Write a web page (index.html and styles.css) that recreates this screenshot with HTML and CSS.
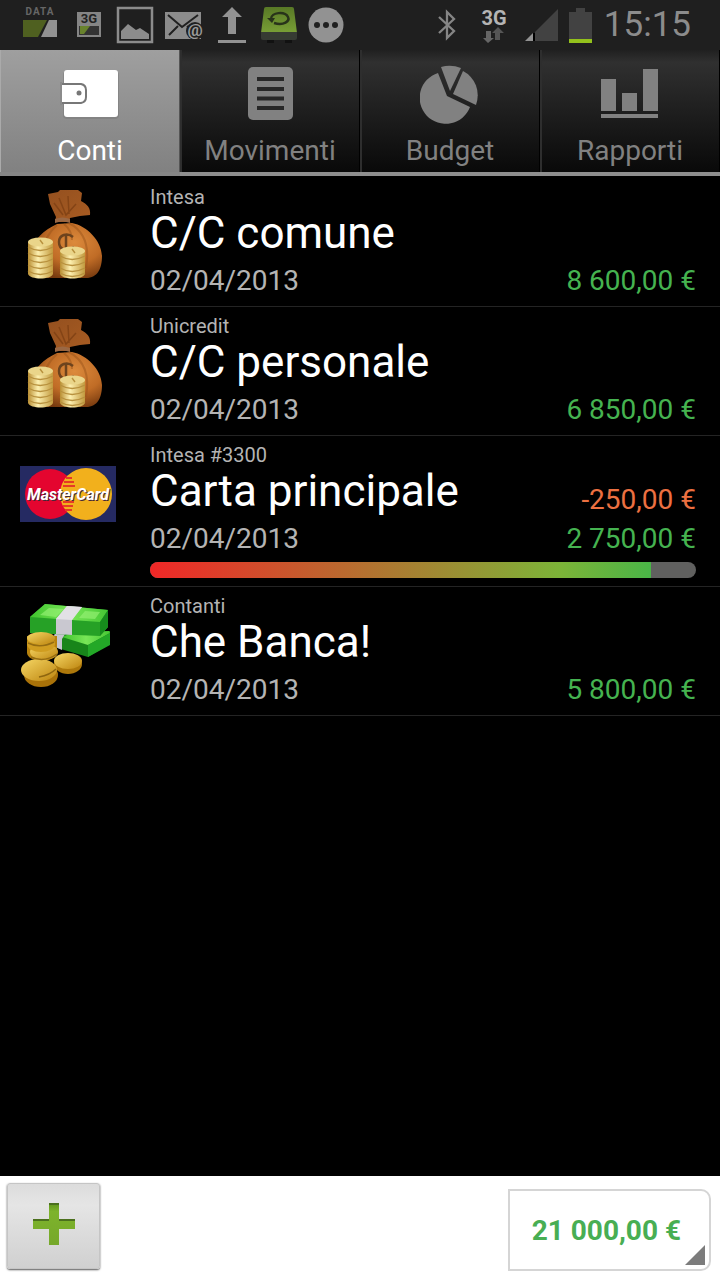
FILE: index.html
```html
<!DOCTYPE html>
<html lang="it">
<head>
<meta charset="utf-8">
<meta name="viewport" content="width=device-width, initial-scale=1">
<title>Conti</title>
<link rel="stylesheet" href="styles.css">
</head>
<body>
<svg class="defs" aria-hidden="true">
  <defs>
    <radialGradient id="bagFill" cx=".62" cy=".35" r=".7"><stop offset="0" stop-color="#dc8a3c"/><stop offset=".55" stop-color="#c06c26"/><stop offset="1" stop-color="#74380e"/></radialGradient>
    <linearGradient id="bagTop" x1="0" y1="0" x2="1" y2="1"><stop offset="0" stop-color="#94501f"/><stop offset="1" stop-color="#a85c22"/></linearGradient>
    <linearGradient id="goldFill"><stop offset="0" stop-color="#b98e32"/><stop offset=".4" stop-color="#fdf0b0"/><stop offset="1" stop-color="#c29a3e"/></linearGradient>
    <linearGradient id="coinFill" x1="0" y1="0" x2="1" y2="1"><stop offset="0" stop-color="#f6d765"/><stop offset="1" stop-color="#bd850f"/></linearGradient>
    <linearGradient id="noteTop"><stop offset="0" stop-color="#3fc42d"/><stop offset=".5" stop-color="#78e657"/><stop offset="1" stop-color="#46c834"/></linearGradient>
    <linearGradient id="driveFill" x1="0" y1="0" x2="0" y2="1"><stop offset="0" stop-color="#587826"/><stop offset="1" stop-color="#799f36"/></linearGradient>
    <linearGradient id="plusFill" x1="0" y1="0" x2="0" y2="1"><stop offset="0" stop-color="#5e931b"/><stop offset=".2" stop-color="#7db32b"/><stop offset="1" stop-color="#76a82b"/></linearGradient>
    <symbol id="bag" viewBox="0 0 96 96">
      <path d="M37 38C24 44 12 54 10 69C8 80 12 90 22 92H66C78 92 82 82 82 70C81 54 67 40 52 37Z" fill="url(#bagFill)"/>
      <path d="M28 8L38 6L40 4H58L62 7L61 15C67 18 71 22 70 29L60 30L50 32L49 36H35L36 31L30 18Z" fill="url(#bagTop)"/>
      <path d="M39 12L46 29L56 18M34 17L43 29M48 10L49 28" stroke="#844416" stroke-width="1.500" fill="none"/>
      <path d="M35 33C40 31 45 31 50 33V37C45 35 40 35 35 37Z" fill="#9a6844"/>
      <path d="M37 39C28 47 23 56 22 70M44 38C50 43 52 48 52 54M49 37C64 45 70 60 66 82" stroke="#9a5319" stroke-width="2" fill="none" opacity=".5"/>
      <path d="M53 51C47 46 39 49 39 56C39 64 47 66 54 61M46 48V63" stroke="#6d431d" stroke-width="2.500" fill="none"/>
      <path d="M8 56V88C10 94 31 94 33 88V56Z" fill="url(#goldFill)"/>
      <ellipse cx="20.500" cy="56" rx="12.500" ry="4.500" fill="#ead58a"/>
      <path d="M8 61Q20 68 33 61M8 67Q20 74 33 67M8 73Q20 80 33 73M8 79Q20 86 33 79M8 85Q20 92 33 85" stroke="#b8913e" stroke-width="1.400" fill="none"/>
      <path d="M40 65V88C42 94 63 94 65 88V65Z" fill="url(#goldFill)"/>
      <ellipse cx="52.500" cy="65" rx="12.500" ry="4.500" fill="#ead58a"/>
      <path d="M40 70Q52 77 65 70M40 76Q52 83 65 76M40 82Q52 89 65 82M40 87Q52 94 65 87M20 54l3 4M52 63l3 4" stroke="#b8913e" stroke-width="1.400" fill="none"/>
    </symbol>
  </defs>
</svg>

<header class="status">
  <div class="status-group">
    <svg class="s-data" width="38" height="40" viewBox="0 0 38 40"><text x="19" y="10" text-anchor="middle" class="t-data">DATA</text><path d="M2 15H26L17 32H2Z" fill="#4f6020"/><path d="M28 15H36V32H20Z" fill="#929292"/></svg>
    <svg class="s-3g" width="26" height="28" viewBox="0 0 26 28"><rect x="1" y="1" width="24" height="25" fill="#858585"/><text x="13" y="12" text-anchor="middle" class="t-mini">3G</text><rect x="3" y="15" width="20" height="9" fill="#333"/><path d="M4 15H14L8 23H4Z" fill="#68822c"/></svg>
    <svg width="38" height="38" viewBox="0 0 38 38"><rect x="2" y="2" width="34" height="34" fill="none" stroke="#8c8c8c" stroke-width="2.500"/><path d="M5 33V25L12 18L20 24L24 22L33 28V33Z" fill="#8c8c8c"/></svg>
    <svg class="s-mail" width="40" height="32" viewBox="0 0 40 32"><path d="M1 3H37V30H1Z" fill="#8c8c8c"/><path d="M4 6L18 18L34 6M5 26L14 17M23 17L32 26" fill="none" stroke="#202020" stroke-width="2"/><circle cx="31" cy="22" r="9" fill="#202020"/><text x="31" y="27" text-anchor="middle" class="t-at">@</text></svg>
    <svg width="28" height="38" viewBox="0 0 28 38"><path d="M14 1L24 11H18V28H10V11H4Z" fill="#929292"/><path d="M0 34H28V37H0Z" fill="#929292"/></svg>
    <svg class="s-drive" width="38" height="38" viewBox="0 0 38 38"><path d="M6 1H32Q34 1 34 3L37 27H1L4 3Q4 1 6 1Z" fill="url(#driveFill)"/><path d="M1 26H37V32Q37 34 35 34H3Q1 34 1 32Z" fill="#363b33"/><path d="M7 34h7v3h-7zM25 34h7v3h-7z" fill="#111"/><path d="M14 17C24 20 30 15 28 11C25 5 11 6 11 13" fill="none" stroke="#28331a" stroke-width="2.500"/><path d="M7 12H15L12 17Z" fill="#28331a"/></svg>
    <svg width="36" height="36" viewBox="0 0 36 36"><circle cx="18" cy="18" r="17.500" fill="#929292"/><g fill="#202020"><circle cx="9" cy="18" r="3"/><circle cx="18" cy="18" r="3"/><circle cx="27" cy="18" r="3"/></g></svg>
  </div>
  <div class="status-group status-right">
    <svg width="20" height="32" viewBox="0 0 20 32"><path d="M2 8L17 22L10 29V3L17 10L2 24" fill="none" stroke="#858585" stroke-width="2.300"/></svg>
    <svg class="s-net" width="30" height="42" viewBox="0 0 30 42"><text x="15" y="21" text-anchor="middle" class="t-net">3G</text><path d="M7 27H12V34H15L9 39L4 34H7Z" fill="#666"/><path d="M16 36V29H13L19 23L25 29H21V36Z" fill="#555"/></svg>
    <svg width="34" height="34" viewBox="0 0 34 34"><path d="M33 1V33H10V24Z" fill="#424242"/><path d="M8 25V33H0Z" fill="#929292"/><path d="M8 25H10V33H8Z" fill="#000"/></svg>
    <svg width="23" height="35" viewBox="0 0 23 35"><path d="M7 0H16V4H23V31H0V4H7Z" fill="#424242"/><path d="M0 31H23V35H0Z" fill="#93c11c"/></svg>
    <time class="clock">15:15</time>
  </div>
</header>

<nav class="tabs">
  <button class="tab tab-on" type="button">
    <svg width="60" height="60" viewBox="0 0 60 60"><rect x="3" y="7" width="56" height="48" rx="4" fill="#777" opacity=".5"/><rect x="4" y="6" width="54" height="47" rx="3" fill="#fff"/><path d="M0 20H21Q26 21 26 26V33Q26 38 21 39H0Z" fill="#fff" stroke="#777" stroke-width="2"/><path d="M0 18h2v23H0z" fill="#8b8b8b"/><path d="M2 21h2v17H2z" fill="#fff"/><circle cx="19" cy="29" r="2.500" fill="#777"/></svg>
    <span>Conti</span>
  </button>
  <button class="tab" type="button">
    <svg width="60" height="60" viewBox="0 0 60 60"><rect x="8" y="3" width="45" height="53" rx="5" fill="#818181"/><path d="M17 15H44M17 25H44M17 34.500H44M17 44H44" stroke="#272727" stroke-width="4"/></svg>
    <span>Movimenti</span>
  </button>
  <button class="tab" type="button">
    <svg width="60" height="60" viewBox="0 0 60 60"><g fill="#818181"><path d="M27 32L18 9A26 26 0 1 0 50 43Z"/><path d="M30 27L21 3Q31 0 41 4Z"/><path d="M33 30L43 7A26 27 0 0 1 56 41Z"/></g></svg>
    <span>Budget</span>
  </button>
  <button class="tab" type="button">
    <svg width="60" height="60" viewBox="0 0 60 60"><path d="M1 15H16V47H1ZM22 29H37V47H22ZM43 5H58V47H43ZM1 50H58V54H1Z" fill="#818181"/></svg>
    <span>Rapporti</span>
  </button>
</nav>

<main class="accounts">
  <article class="account">
    <svg class="pic" viewBox="0 0 96 96"><use href="#bag"/></svg>
    <div class="info">
      <div class="bank">Intesa</div>
      <div class="line"><h2 class="name">C/C comune</h2></div>
      <div class="line"><time class="date">02/04/2013</time><span class="amount">8 600,00 €</span></div>
    </div>
  </article>
  <article class="account">
    <svg class="pic" viewBox="0 0 96 96"><use href="#bag"/></svg>
    <div class="info">
      <div class="bank">Unicredit</div>
      <div class="line"><h2 class="name">C/C personale</h2></div>
      <div class="line"><time class="date">02/04/2013</time><span class="amount">6 850,00 €</span></div>
    </div>
  </article>
  <article class="account">
    <svg class="pic" viewBox="0 -2 96 96"><rect y="20" width="96" height="56" fill="#252a62"/><circle cx="30" cy="48" r="25" fill="#e4052f"/><circle cx="66" cy="48" r="26" fill="#f2b01c"/><path d="M46 32H52M44 36H54M43 40H55M43 56H54M43 60H53M45 64H52" stroke="#e63a25" stroke-width="2"/><text x="49" y="55" text-anchor="middle" class="t-card t-card-shade">MasterCard</text><text x="48" y="54" text-anchor="middle" class="t-card">MasterCard</text></svg>
    <div class="info">
      <div class="bank">Intesa #3300</div>
      <div class="line"><h2 class="name">Carta principale</h2><span class="amount debt">-250,00 €</span></div>
      <div class="line"><time class="date">02/04/2013</time><span class="amount">2 750,00 €</span></div>
      <div class="meter"><div class="meter-fill" style="width:91.7%"></div></div>
    </div>
  </article>
  <article class="account">
    <svg class="pic" viewBox="0 0 96 96">
      <path d="M46 38L90 36V49L68 62L34 52Z" fill="#18851a"/><path d="M52 38L89 36L90 38L68 50L42 42Z" fill="url(#noteTop)"/><path d="M68 50L90 38V50L68 62Z" fill="#23a827"/><path d="M35 38L47 36L42 44V55L31 50Z" fill="#c5c5cd"/>
      <path d="M10 22L25 9L88 15V32L80 41L10 38Z" fill="#26a126"/><path d="M10 22L25 9L88 15L80 27Z" fill="url(#noteTop)"/><path d="M80 27L88 15V32L80 41Z" fill="#168c1c"/><path d="M20 20L29 13L44 14L36 22ZM59 23L65 16L80 17L75 24Z" fill="#97f175" opacity=".65"/><path d="M47 11L62 12L52 25V40L36 39V24Z" fill="#c9c8d0"/><path d="M47 11L62 12L52 25L36 24Z" fill="#e2e1e6"/>
      <path d="M7 41V58C8 68 33 68 37 59V41Z" fill="#b7820d"/><ellipse cx="24" cy="57" rx="14" ry="8" fill="url(#coinFill)"/><ellipse cx="21" cy="49" rx="14" ry="8" fill="#d09d20"/><ellipse cx="21" cy="43" rx="14" ry="6" fill="url(#coinFill)"/>
      <ellipse cx="48" cy="69" rx="14" ry="10" fill="#ad780b"/><ellipse cx="48" cy="66" rx="14" ry="8" fill="url(#coinFill)"/>
      <ellipse cx="21" cy="80" rx="17" ry="12" fill="#a97209"/><ellipse cx="19" cy="75" rx="18" ry="11" fill="url(#coinFill)"/><path d="M19 82Q30 80 36 74" fill="none" stroke="#8e660f" stroke-width="1.500"/><path d="M8 48Q20 54 34 47M11 62Q24 68 37 59" fill="none" stroke="#956c12" stroke-width="1.500"/>
    </svg>
    <div class="info">
      <div class="bank">Contanti</div>
      <div class="line"><h2 class="name">Che Banca!</h2></div>
      <div class="line"><time class="date">02/04/2013</time><span class="amount">5 800,00 €</span></div>
    </div>
  </article>
</main>

<footer class="bottom">
  <button class="add" type="button" aria-label="Aggiungi"><svg width="44" height="44" viewBox="0 0 44 44"><path d="M17 1H27V17H43V27H27V43H17V27H1V17H17Z" fill="url(#plusFill)"/><path d="M17 1H27V3H17ZM1 17H17V19H1ZM27 17H43V19H27Z" fill="#4b701e"/></svg></button>
  <button class="total" type="button">21 000,00 €<svg class="corner" width="20" height="20" viewBox="0 0 20 20"><path d="M20 0V20H0Z" fill="#7c7c7c"/></svg></button>
</footer>
</body>
</html>
```

FILE: styles.css
```css
* { box-sizing: border-box; }

body {
  margin: 0;
  min-height: 100vh;
  display: flex;
  flex-direction: column;
  background: #000;
  color: #fff;
  font-family: Roboto, "Noto Sans", sans-serif;
}

button {
  font: inherit;
  border: 0;
  border-radius: 0;
  padding: 0;
  cursor: pointer;
}

svg { display: block; flex: none; }
.defs { position: absolute; width: 0; height: 0; }

/* Status bar */
.status {
  height: 50px;
  display: flex;
  align-items: center;
  justify-content: space-between;
  padding: 0 29px 0 21px;
  background: #1f1f1f;
}
.status-group { display: flex; align-items: center; gap: 14px; }
.s-data { margin-right: 3px; }
.s-mail { margin-left: -4px; }
.s-drive { margin-right: -4px; }
.status-right { gap: 10px; }
.s-net { margin: 0 6px 0 12px; }
.clock { font-size: 35px; line-height: 50px; color: #8c8c8c; margin-left: 2px; }
.t-data { font: bold 10px Roboto, sans-serif; fill: #666; letter-spacing: 1px; }
.t-mini { font: bold 13px Roboto, sans-serif; fill: #222; }
.t-at { font: bold 17px Roboto, sans-serif; fill: #999; }
.t-net { font: bold 20px Roboto, sans-serif; fill: #b4b4b4; }

/* Tabs */
.tabs {
  display: grid;
  grid-template-columns: repeat(4, 1fr);
  margin-bottom: 2px;
}
.tab {
  height: 126px;
  display: flex;
  flex-direction: column;
  align-items: center;
  padding-top: 14px;
  gap: 9px;
  border-bottom: 4px solid #8e8e8e;
  background: linear-gradient(#202020, #303030 10%, #090909);
  box-shadow: inset 2px 0 #2e2e2e, inset -1px 0 #000;
  color: #818181;
  font-size: 28px;
  line-height: 36px;
}
.tab-on {
  border-bottom-color: #858585;
  background: linear-gradient(#9f9f9f, #818181);
  box-shadow: inset 1px 0 #aaa, inset -1px 0 #555;
  color: #fff;
}

/* Account list */
.accounts { flex: 1; }
.account {
  display: flex;
  gap: 34px;
  padding: 8px 24px 0 20px;
  border-bottom: 1px solid #242424;
}
.pic { width: 96px; height: 96px; }
.info { flex: 1; min-width: 0; padding-bottom: 2px; }
.bank { font-size: 20px; line-height: 22px; color: #b4b4b4; }
.line { display: flex; align-items: flex-end; justify-content: space-between; }
.name { margin: 0; font-size: 44px; line-height: 50px; font-weight: 400; }
.date { font-size: 28px; line-height: 46px; color: #b4b4b4; }
.amount { font-size: 28px; line-height: 46px; color: #45b350; }
.debt { line-height: 32px; color: #ec7041; }
.meter {
  height: 16px;
  margin-bottom: 6px;
  border-radius: 8px;
  overflow: hidden;
  background: #60605f;
}
.meter-fill {
  height: 100%;
  background: linear-gradient(90deg, #f12727, #7cb438 82%, #4ab547);
}
.t-card { font: italic bold 16px Roboto, sans-serif; fill: #fff; }
.t-card-shade { fill: #442838; }

/* Bottom bar */
.bottom {
  height: 104px;
  display: flex;
  align-items: flex-start;
  justify-content: space-between;
  padding: 7px 9px 0 7px;
  background: #fff;
}
.add {
  width: 93px;
  height: 86px;
  display: grid;
  place-items: center;
  padding-bottom: 4px;
  border: 1px solid #c5c5c5;
  border-radius: 3px;
  background: linear-gradient(#dcdcdc, #e5e5e5 25%, #d0d0d0);
  box-shadow: 0 1px 2px #555;
}
.total {
  position: relative;
  margin-top: 6px;
  height: 82px;
  padding: 0 28px 0 22px;
  border: 2px solid #d5d5d5;
  border-radius: 0 10px 10px 0;
  background: #fff;
  color: #48ae53;
  font-size: 28px;
  font-weight: 700;
}
.corner { position: absolute; right: 4px; bottom: 4px; }
```
